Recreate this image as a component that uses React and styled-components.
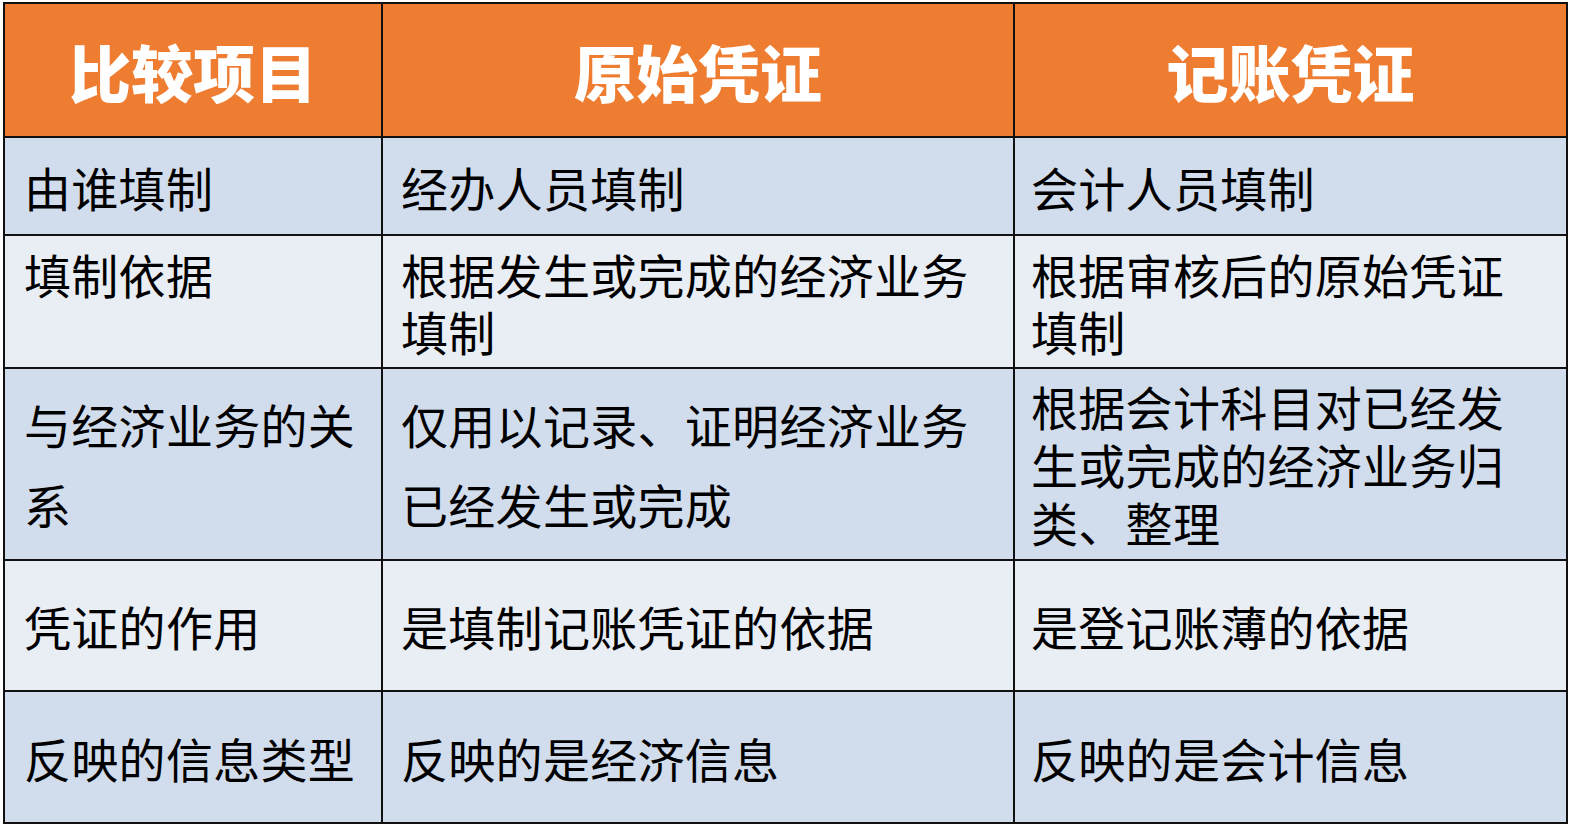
import styled, { createGlobalStyle } from "styled-components";

const GlobalStyle = createGlobalStyle`
  html, body {
    margin: 0;
    padding: 0;
    background: #ffffff;
  }
  body {
    font-family: "Noto Sans CJK SC", "Noto Sans", sans-serif;
  }
`;

const Page = styled.div`
  padding: 2px 0 0 3px;
`;

const Table = styled.div`
  display: grid;
  width: 1565px;
  grid-template-columns: 376px 630px 551px;
  grid-template-rows: 132px 96px 131px 190px 129px 130px;
  gap: 2px;
  padding: 2px;
  box-sizing: border-box;
  background: #111111;
`;

const HeadCell = styled.div`
  background: #ee7d31;
  color: #ffffff;
  font-size: 62px;
  font-weight: 900;
  display: flex;
  align-items: center;
  justify-content: center;
  padding-top: 2px;
  letter-spacing: 0px;
`;

const Cell = styled.div`
  background: ${(p) => (p.$odd ? "#d1dcec" : "#e9edf4")};
  color: #000000;
  font-size: 47px;
  line-height: ${(p) => p.$lh || 57}px;
  display: flex;
  align-items: ${(p) => (p.$top ? "flex-start" : "center")};
  padding: ${(p) => (p.$top ? "9px" : "0")} ${(p) => p.$pr}px 0 ${(p) => p.$pl}px;
  box-sizing: border-box;
  letter-spacing: 0.3px;
`;

const pads = [
  { l: 19, r: 10 },
  { l: 18, r: 30 },
  { l: 16, r: 40 },
];

const rows = [
  { cells: ["由谁填制", "经办人员填制", "会计人员填制"] },
  {
    cells: ["填制依据", "根据发生或完成的经济业务填制", "根据审核后的原始凭证填制"],
    top: [true, false, false],
  },
  {
    cells: [
      "与经济业务的关系",
      "仅用以记录、证明经济业务已经发生或完成",
      "根据会计科目对已经发生或完成的经济业务归类、整理",
    ],
    lh: [80, 80, 58],
  },
  { cells: ["凭证的作用", "是填制记账凭证的依据", "是登记账薄的依据"] },
  { cells: ["反映的信息类型", "反映的是经济信息", "反映的是会计信息"] },
];

export default function App() {
  return (
    <Page>
      <GlobalStyle />
      <Table>
        <HeadCell>比较项目</HeadCell>
        <HeadCell>原始凭证</HeadCell>
        <HeadCell>记账凭证</HeadCell>
        {rows.map((row, r) =>
          row.cells.map((text, c) => (
            <Cell
              key={`${r}-${c}`}
              $odd={r % 2 === 0}
              $pl={pads[c].l}
              $pr={pads[c].r}
              $top={row.top && row.top[c]}
              $lh={row.lh && row.lh[c]}
            >
              <span>{text}</span>
            </Cell>
          ))
        )}
      </Table>
    </Page>
  );
}
